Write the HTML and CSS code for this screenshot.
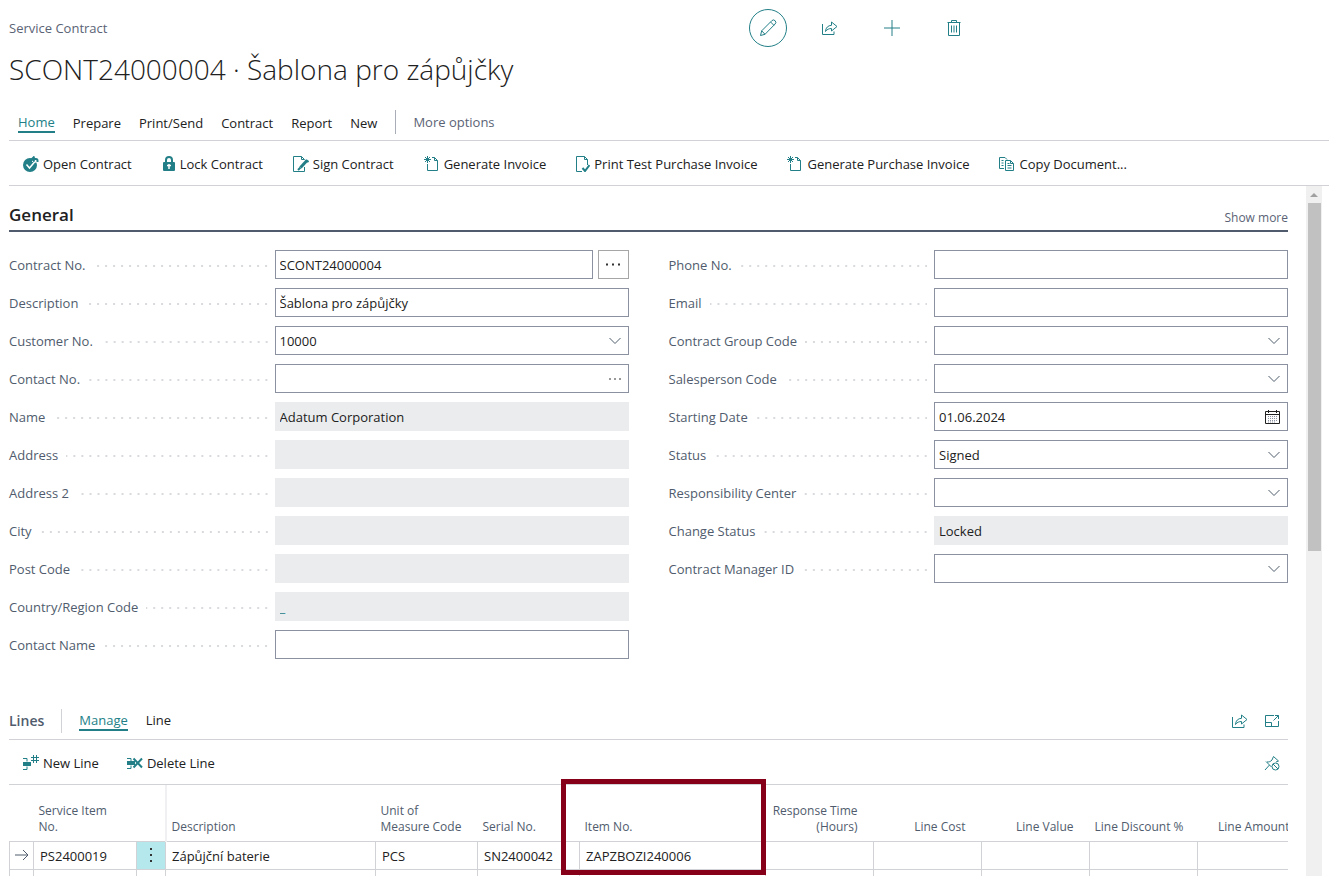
FILE: index.html
```html
<!DOCTYPE html>
<html lang="en">
<head>
    <meta charset="UTF-8">
    <meta name="viewport" content="width=device-width, initial-scale=1.0">
    <title>Service Contract</title>
    <link rel="stylesheet" href="styles.css">
</head>
<body>
    <!-- Shared icons -->
    <svg class="sprite" aria-hidden="true">
        <symbol id="share" viewBox="0 0 16 16">
            <path d="M.5 4v10.500h11.500v-3M3.500 11.500c.3-4 2.500-6 6-6.200V2l5.500 4.500-5.500 4.500V8.500c-2.500 0-4.500.8-6 3z"/>
        </symbol>
        <symbol id="chevron" viewBox="0 0 12 7">
            <path d="M.5.5 6 6 11.500.5"/>
        </symbol>
        <symbol id="new-doc" viewBox="0 0 16 16">
            <path d="M3.500 8v6.500h10V4.500L10.500 1.500H8M10.500 1.500v3h3M3.500 0v7M0 3.500h7M1 1l5 5M6 1 1 6"/>
        </symbol>
    </svg>

    <header>
        <div class="topbar">
            <span class="caption">Service Contract</span>
            <div class="page-actions">
                <button class="round active" aria-label="Edit">
                    <svg width="18" height="18" viewBox="0 0 18 18"><path d="M1.500 16.500l1.200-4.700L12.800 1.700a2.200 2.200 0 0 1 3.300 3.300L6 15.300zM2.700 11.800 6 15.300M11.600 3l3.300 3.300"/></svg>
                </button>
                <button class="round" aria-label="Share">
                    <svg width="16" height="16"><use href="#share"/></svg>
                </button>
                <button class="round" aria-label="New">
                    <svg width="16" height="16" viewBox="0 0 16 16"><path d="M8 0v16M0 8h16"/></svg>
                </button>
                <button class="round" aria-label="Delete">
                    <svg width="14" height="16" viewBox="0 0 14 16"><path d="M.5 2.500h13M4.500 2.500v-2h5v2M1.500 2.500v13h11v-13M4.500 5.500v7M7 5.500v7M9.500 5.500v7"/></svg>
                </button>
            </div>
        </div>
        <h1>SCONT24000004 · Šablona pro zápůjčky</h1>
        <nav class="tabs">
            <a href="#" class="selected">Home</a>
            <a href="#">Prepare</a>
            <a href="#">Print/Send</a>
            <a href="#">Contract</a>
            <a href="#">Report</a>
            <a href="#">New</a>
            <a href="#" class="more">More options</a>
        </nav>
        <div class="actions">
            <button>
                <svg width="16" height="16" viewBox="0 0 16 16"><circle class="fill" cx="7" cy="9" r="7"/><path class="white" d="M3.500 8.500 6.500 12 12 5.500"/><path class="halo" d="M9 3.500h3.500a2 2 0 0 1 2 2v1"/><path class="bold" d="M9 3h4a1.500 1.500 0 0 1 1.500 1.500V6M11.500.5 9 3l2.500 2.500"/></svg>
                Open Contract
            </button>
            <button>
                <svg width="14" height="16" viewBox="0 0 14 16"><path class="bold" d="M4 7V4a3 3 0 0 1 6 0v3"/><rect class="fill" x="1" y="6" width="12" height="9" rx="1"/><path class="white" d="M7 8v5M5 9.500h4"/></svg>
                Lock Contract
            </button>
            <button>
                <svg width="16" height="16" viewBox="0 0 16 16"><path d="M11.500 11v4.500H.5V.5h8l3 3M8.500.5v3h3"/><path class="heavy" d="M14 4.500 7.500 11.500"/><path class="bold" d="M7.500 11.500 5 14M13 4l2.500 2"/></svg>
                Sign Contract
            </button>
            <button>
                <svg width="16" height="16"><use href="#new-doc"/></svg>
                Generate Invoice
            </button>
            <button>
                <svg width="14" height="16" viewBox="0 0 14 16"><path d="M6 15.500H.5V.5h8l3 3V9M8.500.5v3h3"/><path class="bold" d="M6.500 12 9 15l4.500-6"/></svg>
                Print Test Purchase Invoice
            </button>
            <button>
                <svg width="16" height="16"><use href="#new-doc"/></svg>
                Generate Purchase Invoice
            </button>
            <button>
                <svg width="16" height="16" viewBox="0 0 16 16"><path d="M5 12.500H.5V1.500H6l2 2M2.500 4.500h2M2.500 7h2M2.500 9.500h2M6.500 4.500h5l3 3v7h-8zM11.500 4.500v3h3M8.500 7.500h2M8.500 9.500h4M8.500 12h4"/></svg>
                Copy Document...
            </button>
        </div>
    </header>

    <div class="viewport">
        <main>
            <div class="section-title">
                <h2>General</h2>
                <a href="#">Show more</a>
            </div>

            <form class="fields">
                <div class="column">
                    <div class="row">
                        <label for="contractNo">Contract No.</label>
                        <div class="field">
                            <input type="text" id="contractNo" value="SCONT24000004">
                            <button type="button" class="assist" aria-label="Assist edit"><svg width="15" height="3" viewBox="0 0 15 3"><path class="dots" d="M0 1.500h2M6 1.500h2M12 1.500h2"/></svg></button>
                        </div>
                    </div>
                    <div class="row">
                        <label for="description">Description</label>
                        <div class="field"><input type="text" id="description" value="Šablona pro zápůjčky"></div>
                    </div>
                    <div class="row">
                        <label for="customerNo">Customer No.</label>
                        <div class="field">
                            <select id="customerNo"><option>10000</option></select>
                            <svg class="mark" width="12" height="7"><use href="#chevron"/></svg>
                        </div>
                    </div>
                    <div class="row">
                        <label for="contactNo">Contact No.</label>
                        <div class="field">
                            <input type="text" id="contactNo">
                            <svg class="mark" width="12" height="2" viewBox="0 0 12 2"><path class="dots small" d="M0 1h2M5 1h2M10 1h2"/></svg>
                        </div>
                    </div>
                    <div class="row">
                        <label for="name">Name</label>
                        <div class="field"><input type="text" id="name" value="Adatum Corporation" readonly></div>
                    </div>
                    <div class="row">
                        <label for="address">Address</label>
                        <div class="field"><input type="text" id="address" readonly></div>
                    </div>
                    <div class="row">
                        <label for="address2">Address 2</label>
                        <div class="field"><input type="text" id="address2" readonly></div>
                    </div>
                    <div class="row">
                        <label for="city">City</label>
                        <div class="field"><input type="text" id="city" readonly></div>
                    </div>
                    <div class="row">
                        <label for="postCode">Post Code</label>
                        <div class="field"><input type="text" id="postCode" readonly></div>
                    </div>
                    <div class="row">
                        <label for="country">Country/Region Code</label>
                        <div class="field"><input type="text" id="country" class="linked" value="_" readonly></div>
                    </div>
                    <div class="row">
                        <label for="contactName">Contact Name</label>
                        <div class="field"><input type="text" id="contactName"></div>
                    </div>
                </div>

                <div class="column">
                    <div class="row">
                        <label for="phone">Phone No.</label>
                        <div class="field"><input type="text" id="phone"></div>
                    </div>
                    <div class="row">
                        <label for="email">Email</label>
                        <div class="field"><input type="text" id="email"></div>
                    </div>
                    <div class="row">
                        <label for="groupCode">Contract Group Code</label>
                        <div class="field">
                            <select id="groupCode"><option></option></select>
                            <svg class="mark" width="12" height="7"><use href="#chevron"/></svg>
                        </div>
                    </div>
                    <div class="row">
                        <label for="salesperson">Salesperson Code</label>
                        <div class="field">
                            <select id="salesperson"><option></option></select>
                            <svg class="mark" width="12" height="7"><use href="#chevron"/></svg>
                        </div>
                    </div>
                    <div class="row">
                        <label for="startingDate">Starting Date</label>
                        <div class="field">
                            <input type="text" id="startingDate" value="01.06.2024">
                            <svg class="mark calendar" width="15" height="14" viewBox="0 0 15 14"><path d="M.5 1.500h14v12H.5zM.5 4.500h14M3.500 0v3M11.500 0v3"/><path class="days" d="M3 6.500h10M3 8.500h10M3 10.500h10M3 12h7"/></svg>
                        </div>
                    </div>
                    <div class="row">
                        <label for="status">Status</label>
                        <div class="field">
                            <select id="status"><option>Signed</option></select>
                            <svg class="mark" width="12" height="7"><use href="#chevron"/></svg>
                        </div>
                    </div>
                    <div class="row">
                        <label for="respCenter">Responsibility Center</label>
                        <div class="field">
                            <select id="respCenter"><option></option></select>
                            <svg class="mark" width="12" height="7"><use href="#chevron"/></svg>
                        </div>
                    </div>
                    <div class="row">
                        <label for="changeStatus">Change Status</label>
                        <div class="field"><input type="text" id="changeStatus" value="Locked" readonly></div>
                    </div>
                    <div class="row">
                        <label for="manager">Contract Manager ID</label>
                        <div class="field">
                            <select id="manager"><option></option></select>
                            <svg class="mark" width="12" height="7"><use href="#chevron"/></svg>
                        </div>
                    </div>
                </div>
            </form>

            <section>
                <div class="lines-bar">
                    <h3>Lines</h3>
                    <nav>
                        <a href="#" class="selected">Manage</a>
                        <a href="#">Line</a>
                    </nav>
                    <div class="icons">
                        <button aria-label="Share"><svg width="16" height="16"><use href="#share"/></svg></button>
                        <button aria-label="Expand"><svg width="16" height="14" viewBox="0 0 16 14"><path d="M10 1.500H1.500v11h13V7M1.500 8.500h6v4M9.500 6.500l5-5M11 1.500h3.500V5"/></svg></button>
                    </div>
                </div>
                <div class="actions lines-actions">
                    <button>
                        <svg width="16" height="16" viewBox="0 0 16 16"><path d="M0 3.500h4v3M0 14.500h4v-3"/><rect class="fill" x="0" y="7" width="8" height="4"/><path d="M10.500 0v8M13.500 0v8M8 2.500h8M8 5.500h8"/></svg>
                        New Line
                    </button>
                    <button>
                        <svg width="16" height="16" viewBox="0 0 16 16"><path d="M0 3.500h4v3M0 13.500h4v-3"/><rect class="fill" x="0" y="6" width="8" height="4"/><path class="bold" d="M6.500 3.500 15 12.500M15 3.500 6.500 12.500"/></svg>
                        Delete Line
                    </button>
                    <button class="pin" aria-label="Unpin">
                        <svg width="16" height="16" viewBox="0 0 16 16"><path d="M1 15l4.500-5M2 6.500l5.500 5.500M3 7c2 0 3.500-.3 5-2l1.500-3.500L14.500 6M14.500 6 12 7"/><circle cx="11.500" cy="11.500" r="3.500"/><path d="M9 9l5 5"/></svg>
                    </button>
                </div>

                <div class="grid">
                    <div class="grid-clip">
                        <table>
                            <colgroup>
                                <col class="c-arrow"><col class="c-item"><col class="c-menu"><col class="c-desc"><col class="c-code"><col class="c-code"><col class="c-no"><col class="c-num"><col class="c-num"><col class="c-num"><col class="c-num"><col class="c-num">
                            </colgroup>
                            <thead>
                                <tr>
                                    <th></th>
                                    <th>Service Item<br>No.</th>
                                    <th class="freeze"></th>
                                    <th>Description</th>
                                    <th>Unit of<br>Measure Code</th>
                                    <th>Serial No.</th>
                                    <th>Item No.</th>
                                    <th class="num">Response Time<br>(Hours)</th>
                                    <th class="num">Line Cost</th>
                                    <th class="num">Line Value</th>
                                    <th class="num">Line Discount %</th>
                                    <th class="num">Line Amount</th>
                                </tr>
                            </thead>
                            <tbody>
                                <tr>
                                    <td class="pointer"><svg width="14" height="12" viewBox="0 0 14 12"><path d="M0 6h13M8 1l5 5-5 5"/></svg></td>
                                    <td>PS2400019</td>
                                    <td class="menu"><button aria-label="Row menu"><svg width="2" height="14" viewBox="0 0 2 14"><path class="dots" d="M1 0v2M1 6v2M1 12v2"/></svg></button></td>
                                    <td>Zápůjční baterie</td>
                                    <td>PCS</td>
                                    <td>SN2400042</td>
                                    <td>ZAPZBOZI240006</td>
                                    <td></td>
                                    <td></td>
                                    <td></td>
                                    <td></td>
                                    <td></td>
                                </tr>
                                <tr>
                                    <td></td><td></td><td></td><td></td><td></td><td></td><td></td><td></td><td></td><td></td><td></td><td></td>
                                </tr>
                            </tbody>
                        </table>
                    </div>
                    <div class="highlight"></div>
                </div>
            </section>
        </main>
        <div class="scrollbar">
            <svg width="8" height="4" viewBox="0 0 8 4"><path d="M0 4l4-4 4 4z"/></svg>
            <div class="thumb"></div>
        </div>
    </div>
</body>
</html>
```
FILE: styles.css
```css
* {
    box-sizing: border-box;
}

body {
    margin: 0;
    height: 100vh;
    display: flex;
    flex-direction: column;
    overflow: hidden;
    background: white;
    color: #212121;
    font-family: "Open Sans", "Noto Sans", sans-serif;
    font-size: 13px;
    line-height: 18px;
}

h1, h2, h3 {
    margin: 0;
}

a {
    color: inherit;
    text-decoration: none;
}

button, input, select {
    font: inherit;
    color: inherit;
}

button {
    border: none;
    background: none;
    padding: 0;
    cursor: pointer;
}

svg {
    display: block;
    flex: none;
    fill: none;
    stroke: #227f87;
}

.sprite {
    position: absolute;
    width: 0;
    height: 0;
}

.fill {
    fill: #227f87;
    stroke: none;
}

.white {
    stroke: white;
    stroke-width: 1.5;
}

.halo {
    stroke: white;
    stroke-width: 5;
}

.bold {
    stroke-width: 2;
}

.heavy {
    stroke-width: 3;
}

.dots {
    stroke: #333;
    stroke-width: 2;
}

.dots.small {
    stroke-width: 1;
}

/* Page header */
header {
    flex: none;
    padding: 9px 0 0 9px;
}

.topbar {
    display: grid;
    grid-template-columns: 740fr 580fr;
    align-items: center;
}

.caption {
    color: #5a6375;
}

.page-actions {
    display: flex;
    gap: 24px;
}

.round {
    width: 38px;
    height: 38px;
    border-radius: 50%;
    display: flex;
    align-items: center;
    justify-content: center;
}

.round.active {
    border: 1px solid #227f87;
}

h1 {
    font-size: 28px;
    font-weight: 300;
    line-height: 44px;
}

.tabs {
    display: flex;
    align-items: center;
    gap: 18px;
    height: 50px;
    padding: 12px 9px 0;
    border-bottom: 1px solid #d0d2d6;
}

.tabs a {
    padding-top: 2px;
}

.selected {
    color: #227f87;
    border-bottom: 2px solid #227f87;
}

.tabs .more {
    color: #5a6375;
    border-left: 1px solid #a9adb8;
    padding: 3px 0 3px 17px;
}

.actions {
    display: flex;
    align-items: center;
    gap: 30px;
    height: 45px;
    padding-top: 1px;
    padding-left: 14px;
    border-bottom: 1px solid #d0d2d6;
}

.actions button {
    display: flex;
    align-items: center;
    gap: 4px;
    white-space: nowrap;
}

/* Scrolling body */
.viewport {
    flex: 1;
    min-height: 0;
    display: flex;
    padding-right: 7px;
}

main {
    flex: 1;
    min-width: 0;
    overflow: hidden;
    padding: 18px 18px 0 9px;
}

.scrollbar {
    width: 16px;
    background: #f0f0f0;
    display: flex;
    flex-direction: column;
    align-items: center;
    padding-top: 7px;
}

.scrollbar svg {
    fill: #a0a0a0;
    stroke: none;
}

.thumb {
    width: 13px;
    height: 51%;
    margin-top: 6px;
    background: #c1c1c1;
}

.section-title {
    display: flex;
    justify-content: space-between;
    align-items: flex-end;
    border-bottom: 2px solid #505c6d;
    height: 28px;
    padding-bottom: 3px;
}

h2 {
    font-size: 17px;
    font-weight: 600;
    line-height: 24px;
}

.section-title a {
    color: #5a6375;
    font-size: 12px;
}

.fields {
    display: grid;
    grid-template-columns: 1fr 1fr;
    column-gap: 40px;
    padding-top: 18px;
}

.column {
    display: flex;
    flex-direction: column;
    gap: 9px;
}

.row {
    display: grid;
    grid-template-columns: 3fr 4fr;
    align-items: center;
    height: 29px;
}

label {
    display: flex;
    align-items: center;
    color: #505c6d;
    white-space: nowrap;
}

/* dotted leader between label and field */
label::after {
    content: "";
    flex: 1;
    height: 2px;
    margin: 2px 7px 0 8px;
    background: linear-gradient(to left, #d8dade 2px, transparent 2px) right / 8px 2px repeat-x;
}

.field {
    position: relative;
    display: flex;
    gap: 5px;
}

.field input, .field select {
    flex: 1;
    min-width: 0;
    height: 29px;
    padding: 0 4px;
    border: 1px solid #8b91a0;
    border-radius: 0;
    background: white;
    appearance: none;
}

.field input[readonly] {
    background: #ebecee;
    border-color: #ebecee;
}

.field .linked {
    color: #227f87;
}

.assist {
    width: 31px;
    height: 29px;
    border: 1px solid #a6a6a6;
    display: flex;
    align-items: center;
    justify-content: center;
}

.mark {
    position: absolute;
    right: 8px;
    top: 50%;
    transform: translateY(-50%);
    stroke: #505c6d;
    pointer-events: none;
}

.calendar {
    stroke: #212121;
}

.days {
    stroke: #8b91a0;
    stroke-dasharray: 1 1;
}

/* Lines part */
.lines-bar {
    display: flex;
    align-items: center;
    margin-top: 42px;
    height: 39px;
    padding-top: 1px;
    border-bottom: 1px solid #d0d2d6;
}

h3 {
    color: #505c6d;
    font-size: 14px;
    font-weight: 600;
    line-height: 24px;
    padding-right: 17px;
    border-right: 1px solid #d0d2d6;
}

.lines-bar nav {
    display: flex;
    gap: 18px;
    padding-left: 17px;
}

.lines-bar nav a {
    height: 21px;
    padding-top: 1px;
}

.icons {
    display: flex;
    align-items: center;
    gap: 16px;
    margin-left: auto;
    padding-right: 8px;
}

.lines-actions {
    gap: 28px;
    padding-right: 8px;
}

.lines-actions .pin {
    margin-left: auto;
}

.grid {
    position: relative;
}

.grid-clip {
    overflow: hidden;
}

table {
    table-layout: fixed;
    width: 1296px;
    border-collapse: collapse;
}

.c-arrow { width: 24px; }
.c-item { width: 103px; }
.c-menu { width: 29px; }
.c-desc { width: 210px; }
.c-code { width: 102px; }
.c-no { width: 186px; }
.c-num { width: 108px; }

th {
    height: 56px;
    padding: 0 5px 6px;
    color: #505c6d;
    font-size: 12px;
    font-weight: 400;
    line-height: 16px;
    text-align: left;
    vertical-align: bottom;
    white-space: nowrap;
}

th.num {
    text-align: right;
    padding-right: 16px;
}

th.freeze {
    border-right: 2px solid #f0f0f2;
}

td {
    height: 28px;
    padding: 1px 6px 0;
    border: 1px solid #d0d2d6;
    white-space: nowrap;
}

td.pointer {
    padding: 0 5px;
}

.pointer svg {
    stroke: #505c6d;
}

td.menu {
    background: #b5e8ec;
    padding: 0;
}

.menu button {
    display: block;
    margin: 0 auto;
}

.highlight {
    position: absolute;
    left: 552px;
    top: -6px;
    width: 205px;
    height: 96px;
    border: 5px solid #850018;
}
```
